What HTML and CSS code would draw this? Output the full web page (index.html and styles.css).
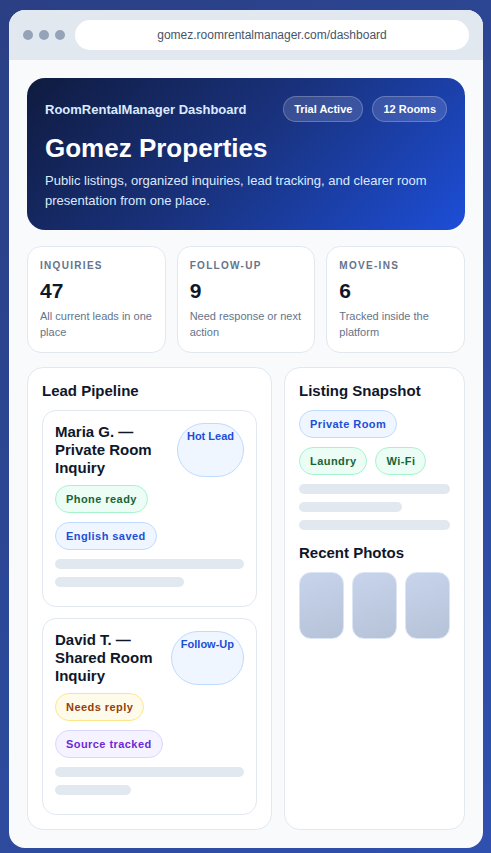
FILE: index.html
```html
<!DOCTYPE html>
<html lang="en">
<head>
    <meta charset="UTF-8">
    <meta name="viewport" content="width=device-width, initial-scale=1.0">
    <title>RoomRentalManager Dashboard</title>
    <link rel="stylesheet" href="styles.css">
</head>
<body>
    <div class="browser">
        <div class="browser-bar">
            <div class="dots">
                <span class="dot"></span>
                <span class="dot"></span>
                <span class="dot"></span>
            </div>
            <div class="url">gomez.roomrentalmanager.com/dashboard</div>
        </div>

        <div class="content">
            <div class="hero">
                <div class="hero-top">
                    <div class="hero-brand">RoomRentalManager Dashboard</div>
                    <div class="hero-pills">
                        <span class="hero-pill">Trial Active</span>
                        <span class="hero-pill">12 Rooms</span>
                    </div>
                </div>
                <h1>Gomez Properties</h1>
                <p>Public listings, organized inquiries, lead tracking, and clearer room presentation from one place.</p>
            </div>

            <div class="stats">
                <div class="stat">
                    <div class="stat-label">Inquiries</div>
                    <div class="stat-value">47</div>
                    <div class="stat-desc">All current leads in one place</div>
                </div>
                <div class="stat">
                    <div class="stat-label">Follow-Up</div>
                    <div class="stat-value">9</div>
                    <div class="stat-desc">Need response or next action</div>
                </div>
                <div class="stat">
                    <div class="stat-label">Move-Ins</div>
                    <div class="stat-value">6</div>
                    <div class="stat-desc">Tracked inside the platform</div>
                </div>
            </div>

            <div class="columns">
                <div class="panel">
                    <h2>Lead Pipeline</h2>

                    <div class="lead">
                        <div class="lead-head">
                            <div class="lead-title">Maria G. — Private Room Inquiry</div>
                            <span class="lead-badge">Hot Lead</span>
                        </div>
                        <div class="chips">
                            <span class="chip green">Phone ready</span>
                            <span class="chip blue">English saved</span>
                        </div>
                        <div class="line"></div>
                        <div class="line" style="width: 68%"></div>
                    </div>

                    <div class="lead">
                        <div class="lead-head">
                            <div class="lead-title">David T. — Shared Room Inquiry</div>
                            <span class="lead-badge">Follow-Up</span>
                        </div>
                        <div class="chips">
                            <span class="chip yellow">Needs reply</span>
                            <span class="chip purple">Source tracked</span>
                        </div>
                        <div class="line"></div>
                        <div class="line" style="width: 40%"></div>
                    </div>
                </div>

                <div class="panel">
                    <h2>Listing Snapshot</h2>
                    <div class="chips">
                        <span class="chip blue">Private Room</span>
                        <span class="chip green">Laundry</span>
                        <span class="chip green">Wi-Fi</span>
                    </div>
                    <div class="line"></div>
                    <div class="line" style="width: 68%"></div>
                    <div class="line"></div>

                    <h2 class="photos-title">Recent Photos</h2>
                    <div class="photos">
                        <div class="photo"></div>
                        <div class="photo"></div>
                        <div class="photo"></div>
                    </div>
                </div>
            </div>
        </div>
    </div>
</body>
</html>
```

FILE: styles.css
```css
body {
    font-family: "Liberation Sans", Arial, sans-serif;
    background: linear-gradient(135deg, #2a3f84 0%, #2d4a9c 60%, #3050b0 100%);
    color: #0f172a;
    margin: 0;
    padding: 10px 8px 5px 9px;
    min-height: 853px;
    box-sizing: border-box;
}

.browser {
    background-color: #f8fafc;
    border-radius: 16px;
    overflow: hidden;
}

.browser-bar {
    background-color: #e2e8f0;
    display: flex;
    align-items: center;
    gap: 10px;
    padding: 10px 14px;
}

.dots {
    display: flex;
    gap: 6px;
}

.dot {
    width: 10px;
    height: 10px;
    border-radius: 50%;
    background-color: #94a3b8;
}

.url {
    flex: 1;
    height: 30px;
    line-height: 30px;
    background-color: #fff;
    border-radius: 999px;
    text-align: center;
    font-size: 12px;
    color: #475569;
}

.content {
    padding: 18px;
}

.hero {
    background: linear-gradient(135deg, #0f1b3f 0%, #1a3380 50%, #1d4ed8 100%);
    border-radius: 18px;
    padding: 18px 18px 19px;
    color: #fff;
}

.hero-top {
    display: flex;
    justify-content: space-between;
    align-items: center;
}

.hero-brand {
    font-size: 13px;
    font-weight: bold;
    color: #dbeafe;
}

.hero-pills {
    display: flex;
    gap: 9px;
}

.hero-pill {
    font-size: 11px;
    font-weight: bold;
    padding: 6px 10px;
    border-radius: 999px;
    background-color: rgba(255, 255, 255, 0.14);
    border: 1px solid rgba(255, 255, 255, 0.22);
}

.hero h1 {
    font-size: 26px;
    margin: 10px 0 7px;
    line-height: 32px;
}

.hero p {
    font-size: 13px;
    line-height: 20px;
    margin: 0;
    color: #dbeafe;
}

.stats {
    display: grid;
    grid-template-columns: repeat(3, 1fr);
    gap: 11px;
    margin-top: 16px;
}

.stat {
    background-color: #fff;
    border: 1px solid #e2e8f0;
    border-radius: 14px;
    padding: 13px 12px 12px;
}

.stat-label {
    font-size: 10px;
    font-weight: 800;
    letter-spacing: 0.13em;
    text-transform: uppercase;
    color: #64748b;
}

.stat-value {
    font-size: 21px;
    font-weight: 900;
    margin: 8px 0 5px;
    line-height: 24px;
}

.stat-desc {
    font-size: 11px;
    line-height: 16px;
    color: #64748b;
}

.columns {
    display: grid;
    grid-template-columns: 245fr 181fr;
    gap: 12px;
    margin-top: 14px;
}

.panel {
    background-color: #fff;
    border: 1px solid #e2e8f0;
    border-radius: 16px;
    padding: 14px;
}

.panel h2 {
    font-size: 15px;
    line-height: 18px;
    margin: 0 0 10px;
}

.panel h2.photos-title {
    margin: 14px 0 10px;
}

.lead {
    border: 1px solid #e2e8f0;
    border-radius: 14px;
    padding: 12px 12px 19px;
}

.lead + .lead {
    margin-top: 11px;
}

.lead-head {
    display: flex;
    gap: 10px;
    align-items: stretch;
}

.lead-title {
    flex: 1;
    font-size: 15px;
    font-weight: bold;
    line-height: 18px;
}

.lead-badge {
    font-size: 11px;
    font-weight: bold;
    color: #1d4ed8;
    background-color: #eff6ff;
    border: 1px solid #bfdbfe;
    border-radius: 999px;
    padding: 6px 9px;
}

.chips {
    display: flex;
    flex-wrap: wrap;
    gap: 9px 8px;
    margin-top: 8px;
}

.chip {
    font-size: 11px;
    font-weight: 800;
    letter-spacing: 0.04em;
    padding: 7px 10px;
    border-radius: 999px;
    border: 1px solid;
}

.chip.green {
    color: #166534;
    background-color: #ecfdf5;
    border-color: #a7f3d0;
}

.chip.blue {
    color: #1d4ed8;
    background-color: #eff6ff;
    border-color: #bfdbfe;
}

.chip.yellow {
    color: #92400e;
    background-color: #fffbeb;
    border-color: #fde68a;
}

.chip.purple {
    color: #6d28d9;
    background-color: #f5f3ff;
    border-color: #ddd6fe;
}

.line {
    height: 10px;
    border-radius: 999px;
    background-color: #e2e8f0;
    margin-top: 8px;
}

.chips + .line {
    margin-top: 9px;
}

.photos {
    display: grid;
    grid-template-columns: repeat(3, 1fr);
    gap: 8px;
}

.photo {
    height: 67px;
    border-radius: 12px;
    background: linear-gradient(160deg, #c8d4eb, #b6c2d8);
    border: 1px solid #dbe5f5;
    box-sizing: border-box;
}
```
